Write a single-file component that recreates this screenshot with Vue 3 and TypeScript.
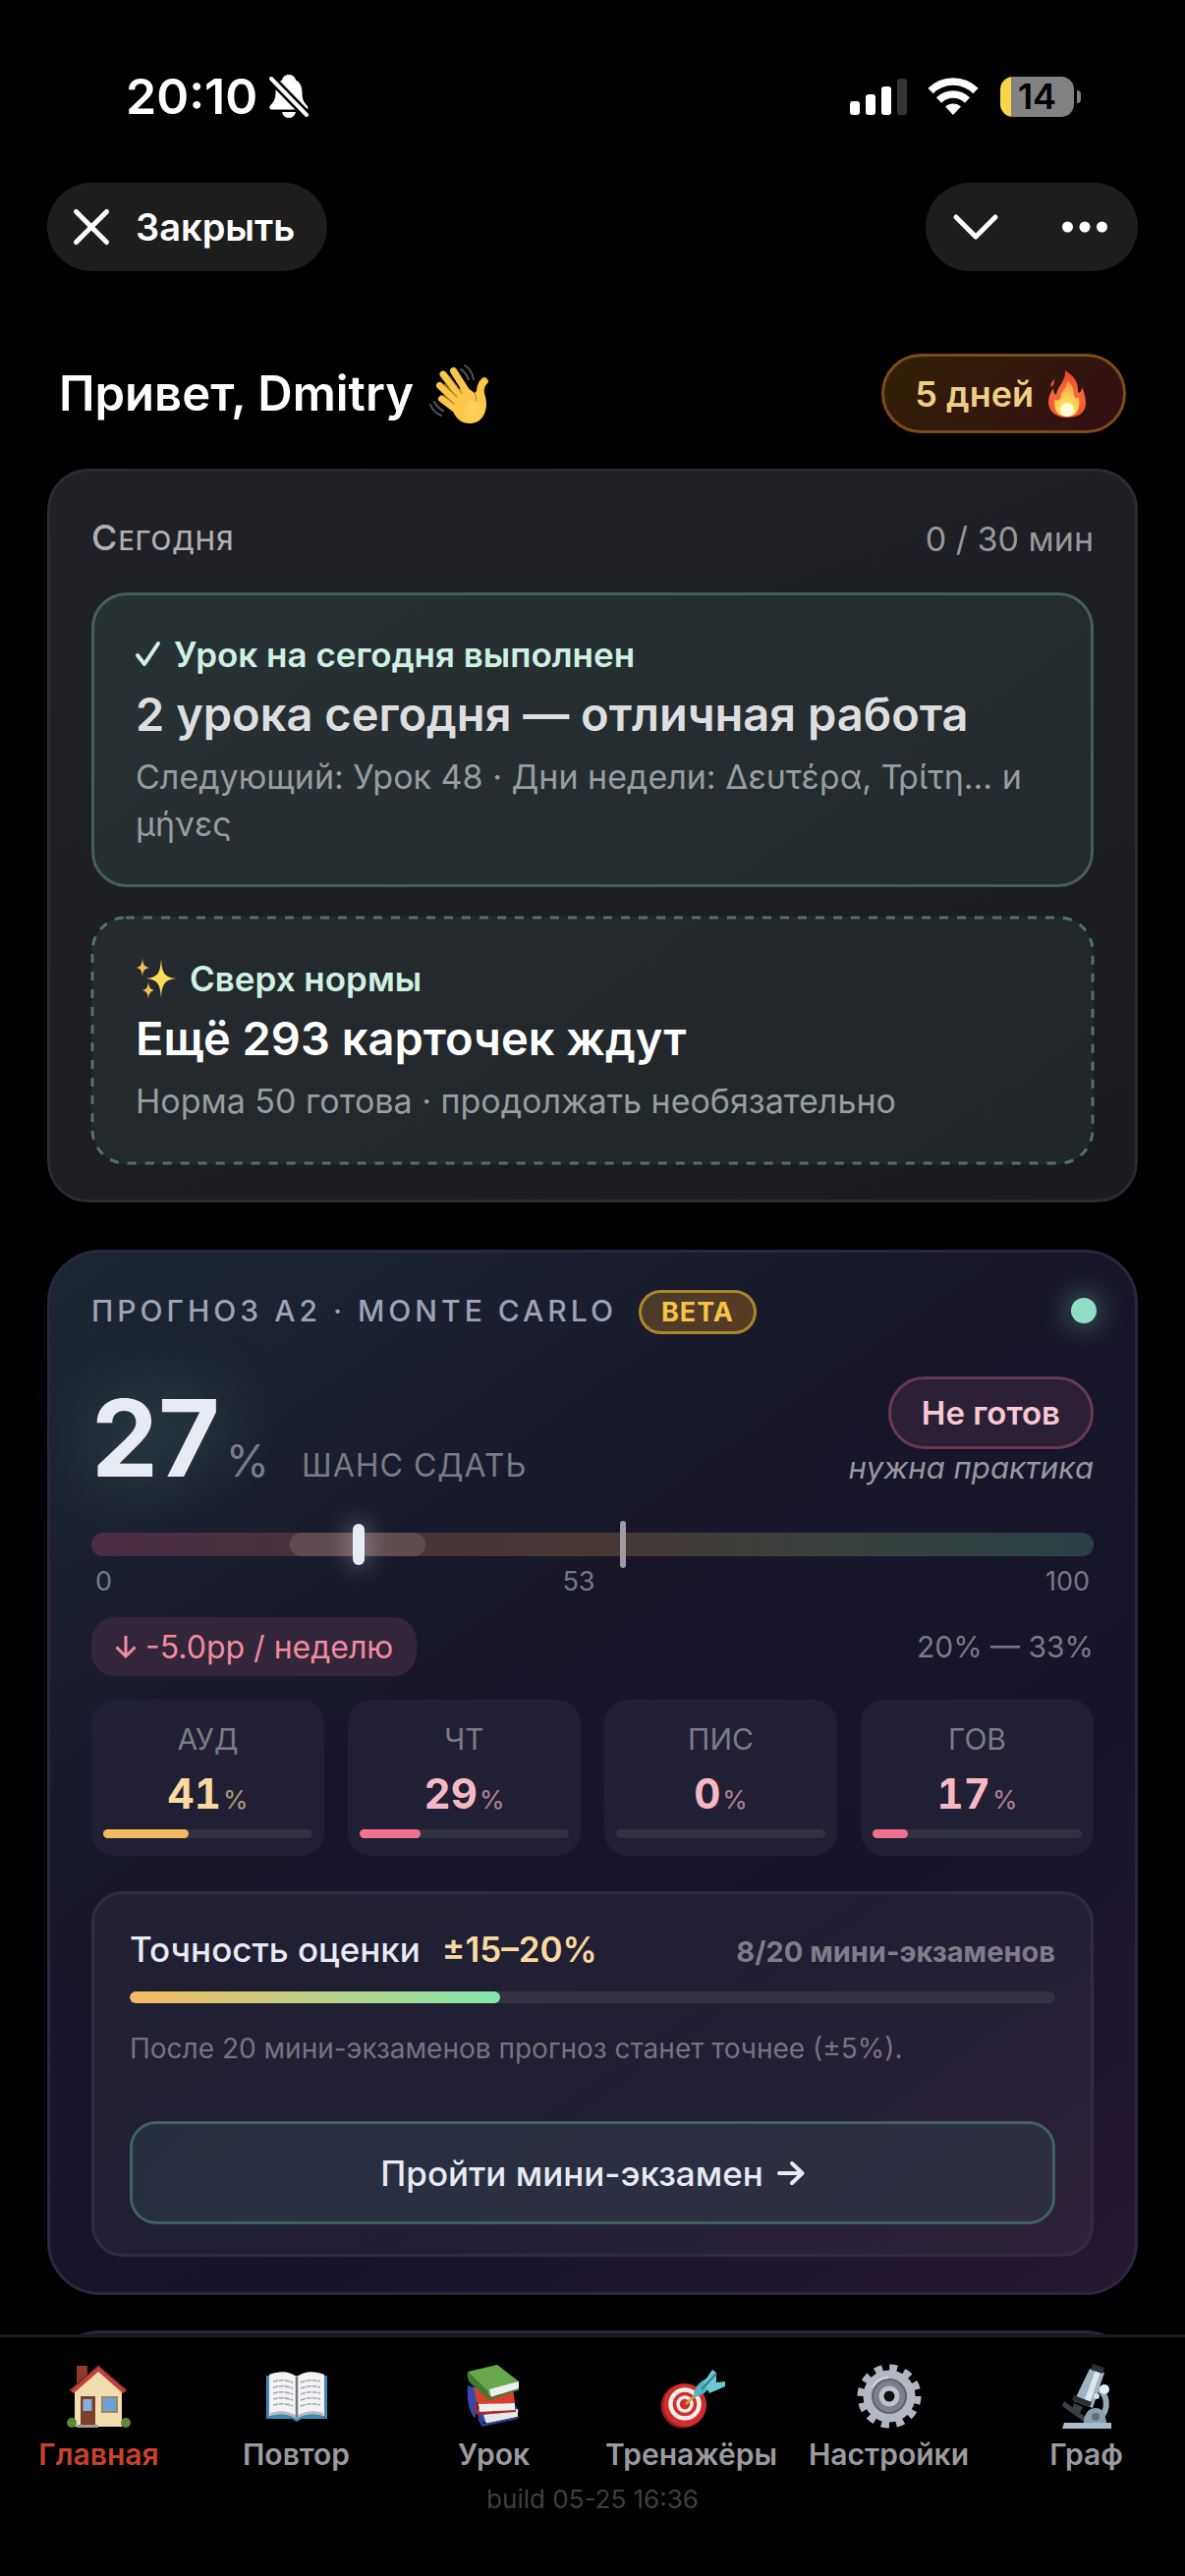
<script setup lang="ts">
interface Skill {
  name: string
  value: number
  tone: 'amber' | 'rose'
}

interface Tab {
  id: string
  label: string
}

const skills: Skill[] = [
  { name: 'АУД', value: 41, tone: 'amber' },
  { name: 'ЧТ', value: 29, tone: 'rose' },
  { name: 'ПИС', value: 0, tone: 'rose' },
  { name: 'ГОВ', value: 17, tone: 'rose' },
]

const tabs: Tab[] = [
  { id: 'home', label: 'Главная' },
  { id: 'review', label: 'Повтор' },
  { id: 'lesson', label: 'Урок' },
  { id: 'drills', label: 'Тренажёры' },
  { id: 'settings', label: 'Настройки' },
  { id: 'graph', label: 'Граф' },
]

const activeTab = 'home'
const forecast = { score: 27, low: 20, high: 33, threshold: 53 }
const exams = { done: 8, total: 20 }
const bars = [14, 21, 29, 37]
</script>

<template>
  <div class="app">
    <header class="status">
      <div class="status-left">
        <span class="clock">20:10</span>
        <svg class="bell" viewBox="0 0 40 44" aria-hidden="true">
          <path d="M20 0c4 0 6.500 2.500 7 5.500 4.500 2 6.500 7 6.500 12.500 0 8 2 10 5 13.500 1.500 2 1 4-1.500 4H3c-2.500 0-3.500-2-2-4C4 28 6.500 26 6.500 18c0-5.500 2-10.500 6.500-12.500C13.500 2.500 16 0 20 0z" fill="#fff" />
          <path d="M13 38h14c-1 4-3.500 6-7 6s-6-2-7-6z" fill="#fff" />
          <path d="M2 4l37 38" stroke="#000" stroke-width="9" />
          <path d="M2 4l36 37" stroke="#fff" stroke-width="4" stroke-linecap="round" />
        </svg>
      </div>
      <div class="status-right">
        <svg class="signal" viewBox="0 0 58 37" aria-hidden="true">
          <rect v-for="(h, i) in bars" :key="h" :x="i * 16" :y="37 - h" width="10" :height="h" rx="3" :fill="i < 3 ? '#fff' : '#353535'" />
        </svg>
        <svg class="wifi" viewBox="0 0 52 38" aria-hidden="true">
          <g fill="none" stroke="#fff" stroke-width="7.500">
            <path d="M3 13.500C16 .700 36 .700 49 13.500" />
            <path d="M11.500 23C20 15 32 15 40.500 23" />
          </g>
          <path d="M18 29.500c4.500-4 11.500-4 16 0L26 38z" fill="#fff" />
        </svg>
        <div class="battery"><span>14</span></div>
      </div>
    </header>

    <div class="toolbar">
      <button class="pill close" type="button">
        <svg viewBox="0 0 36 36" aria-hidden="true"><path d="M2.500 2.500l31 31M33.500 2.500l-31 31" /></svg>
        <span>Закрыть</span>
      </button>
      <div class="pill actions">
        <button type="button" aria-label="Свернуть">
          <svg viewBox="0 0 46 46" aria-hidden="true"><path d="M3 13l20 20 20-20" /></svg>
        </button>
        <button type="button" aria-label="Ещё">
          <svg viewBox="0 0 46 46" aria-hidden="true" class="dots"><circle cx="5.500" cy="23" r="5.500" /><circle cx="23" cy="23" r="5.500" /><circle cx="40.500" cy="23" r="5.500" /></svg>
        </button>
      </div>
    </div>

    <main class="content">
      <div class="greeting">
        <h1>
          Привет, Dmitry
          <svg class="wave" viewBox="0 0 60 60" aria-hidden="true">
            <defs>
              <radialGradient id="skin" cx=".6" cy=".65" r=".7">
                <stop offset="0" stop-color="#ffd55c" /><stop offset=".7" stop-color="#fbc547" /><stop offset="1" stop-color="#d98c20" />
              </radialGradient>
            </defs>
            <path d="M24 36C20 46 28 60 41 60c12 0 17-10 17-20 0-8-4-14-3-20l-9 9-12-9z" fill="url(#skin)" />
            <g fill="none" stroke="#fbc74a" stroke-width="7" stroke-linecap="round">
              <path d="M24.500 6.500L42 34" /><path d="M14 10l22 28" /><path d="M10.500 21.500L33 43" /><path d="M12.500 35L31 49" />
              <path d="M56 17c-5 4-4 10-5 18" stroke-width="7.500" />
            </g>
            <g fill="none" stroke="#c98a21" stroke-width="1.200" stroke-linecap="round">
              <path d="M19.500 11.500L33 29.500M15.500 20L28 33M15 31l10 9M46 30c2 2 2 4 1 7" />
            </g>
            <g fill="none" stroke="#555" stroke-width="2" stroke-linecap="round">
              <path d="M36 1c5 3 8 8 9 14M32 5c4 2 6 6 8 10M1 41c2 5 6 9 11 11M5 38c2 4 5 7 9 9" />
            </g>
          </svg>
        </h1>
        <button class="streak" type="button">
          <span>5 дней</span>
          <svg viewBox="0 0 38 48" aria-hidden="true">
            <defs>
              <linearGradient id="flame" x1="0" y1="0" x2="0" y2="1">
                <stop offset="0" stop-color="#e8412c" /><stop offset=".45" stop-color="#f4683c" /><stop offset="1" stop-color="#f0532f" />
              </linearGradient>
              <radialGradient id="core" cx=".5" cy=".9" r=".8">
                <stop offset="0" stop-color="#fffbe0" /><stop offset=".35" stop-color="#fde35a" /><stop offset="1" stop-color="#f59b45" />
              </radialGradient>
            </defs>
            <path d="M17 0c8 5 13 11 13 19 0 2 0 3 1 4 2-1 3-3 3-6 3 6 4 12 4 17 0 9-8 14-19 14S0 42 0 32c0-5 2-9 5-14 0 4 1 6 3 7 1-9 10-14 9-25z" fill="url(#flame)" />
            <path d="M3 17c-2-3 1-6 3-8 0 3 0 6-3 8z" fill="#ea4a2d" />
            <path d="M19 10c5 5 7 9 7 14 0 4 2 5 5 3 2 10-1 20-12 20S4 38 7 29c3 3 5 1 6-4 1-5 6-7 6-15z" fill="url(#core)" />
            <ellipse cx="19" cy="40" rx="7" ry="7" fill="#fffbd8" />
          </svg>
        </button>
      </div>

      <section class="card today">
        <div class="today-head">
          <h2>Сегодня</h2>
          <span>0 / 30 мин</span>
        </div>
        <article class="task done">
          <p class="task-tag">
            <svg class="check" viewBox="0 0 26 26" aria-hidden="true"><path d="M2 14l7 9L23 2" /></svg>
            Урок на сегодня выполнен
          </p>
          <h3>2 урока сегодня — отличная работа</h3>
          <p class="task-note">Следующий: Урок 48 · Дни недели: Δευτέρα, Τρίτη... и μήνες</p>
        </article>
        <article class="task extra">
          <svg class="outline" aria-hidden="true"><rect width="100%" height="100%" rx="34" /></svg>
          <p class="task-tag">
            <svg class="sparkles" viewBox="0 0 42 42" aria-hidden="true">
              <path d="M26 1c1 14 3 19 16 20-13 1-15 6-16 20-1-14-3-19-16-20 13-1 15-6 16-20z" fill="#fbdc5c" />
              <path d="M7 0c.5 7 2 9 7 10-5 1-6.500 3-7 9-.5-6-2-8-6-9 4-1 5.500-3 6-10zM13 24c.5 6 2 8 6 9-4 1-5.500 3-6 9-.5-6-2-8-6-9 4-1 5.500-3 6-9z" fill="#f7bd4c" />
            </svg>
            Сверх нормы
          </p>
          <h3>Ещё 293 карточек ждут</h3>
          <p class="task-note">Норма 50 готова · продолжать необязательно</p>
        </article>
      </section>

      <section class="card forecast">
        <div class="forecast-head">
          <h2>Прогноз A2 · Monte Carlo</h2>
          <span class="beta">BETA</span>
          <i class="live"></i>
        </div>

        <div class="score-row">
          <div class="score">
            <strong>{{ forecast.score }}</strong>
            <span class="percent">%</span>
            <span class="chance">Шанс сдать</span>
          </div>
          <div class="verdict">
            <span class="verdict-pill">Не готов</span>
            <em>нужна практика</em>
          </div>
        </div>

        <div class="range">
          <i class="band" :style="{ left: forecast.low - 0.2 + '%', width: forecast.high - forecast.low + 0.5 + '%' }"></i>
          <i class="needle" :style="{ left: forecast.score - 0.3 + '%' }"></i>
          <i class="limit" :style="{ left: forecast.threshold + '%' }"></i>
        </div>
        <div class="scale"><span>0</span><span>{{ forecast.threshold }}</span><span>100</span></div>

        <div class="trend-row">
          <span class="trend">
            <svg viewBox="0 0 22 24" aria-hidden="true"><path d="M11 1v21M1.500 12.500L11 22l9.500-9.500" /></svg>
            -5.0pp / неделю
          </span>
          <span class="interval">{{ forecast.low }}% — {{ forecast.high }}%</span>
        </div>

        <div class="skills">
          <div v-for="s in skills" :key="s.name" class="skill" :class="s.tone">
            <span class="skill-name">{{ s.name }}</span>
            <p class="skill-value"><b>{{ s.value }}</b><span>%</span></p>
            <div class="meter"><i :style="{ width: s.value + '%' }"></i></div>
          </div>
        </div>

        <div class="accuracy">
          <div class="accuracy-head">
            <span>Точность оценки</span>
            <b>±15–20%</b>
            <span class="exams">{{ exams.done }}/{{ exams.total }} мини-экзаменов</span>
          </div>
          <div class="progress"><i :style="{ width: (exams.done / exams.total) * 100 + '%' }"></i></div>
          <p>После 20 мини-экзаменов прогноз станет точнее (±5%).</p>
          <button type="button">
            Пройти мини-экзамен
            <svg viewBox="0 0 28 26" aria-hidden="true"><path d="M2 13h23M15 3l10.500 10L15 23" /></svg>
          </button>
        </div>
      </section>

      <section class="card next" aria-hidden="true"></section>
    </main>

    <footer class="dock">
      <nav>
        <a v-for="t in tabs" :key="t.id" :href="'#' + t.id" :class="{ active: t.id === activeTab }">
          <svg viewBox="0 0 66 66" aria-hidden="true">
            <g v-if="t.id === 'home'">
              <rect x="10" y="2" width="11" height="22" fill="#8f3a2c" />
              <path d="M8 26L32 4l24 22v38H8z" fill="#f0deb0" />
              <path d="M3 27L32 2l29 25-4 3L32 8 7 30z" fill="#c8403a" />
              <path d="M3 27L32 2l29 25" fill="none" stroke="#5c2a26" stroke-width="1.500" />
              <rect x="14" y="33" width="15" height="30" fill="#7c3f2a" /><rect x="16.500" y="36" width="9" height="12" fill="#7fb0de" />
              <rect x="35" y="33" width="17" height="17" fill="#9a8660" /><rect x="37" y="35" width="13" height="13" fill="#6fa0d8" />
              <path d="M10 62h22v3H10z" fill="#a49c90" />
              <circle cx="5" cy="60" r="5" fill="#5c8a35" /><circle cx="60" cy="60" r="5" fill="#5c8a35" />
            </g>
            <g v-else-if="t.id === 'review'">
              <path d="M2 12h62v44H38l-5 3-5-3H2z" fill="#3f88b8" />
              <path d="M5 11c10-4 20-4 28 2 8-6 18-6 28-2v42c-10-3-20-3-28 3-8-6-18-6-28-3z" fill="#f3f3f6" />
              <path d="M6 50c10-3 19-2 27 3 8-5 17-6 27-3v3c-10-3-19-2-27 3-8-5-17-6-27-3z" fill="#b9b9c0" />
              <path d="M33 13v42" stroke="#77777f" stroke-width="2.500" />
              <path d="M9 18q10-3 20 1M9 24q10-3 20 1M9 30q10-3 20 1M9 36q10-3 20 1M9 42q10-3 20 1M37 19q10-4 20-1M37 25q10-4 20-1M37 31q10-4 20-1M37 37q10-4 20-1M37 43q10-4 20-1" fill="none" stroke="#a5a5ae" stroke-width="1.600" stroke-dasharray="5 1" />
            </g>
            <g v-else-if="t.id === 'lesson'">
              <path d="M6 22l10 3-2 30-3-2C6 44 5 34 6 22z" fill="#3449a8" />
              <path d="M12 46l42-5 4 8-36 11z" fill="#2f47a5" /><path d="M22 52l35-6v8l-32 7z" fill="#e8e8ec" /><path d="M18 46l4 15 35-7v2l-36 8c-5-5-6-12-3-18z" fill="#2c3f96" />
              <path d="M12 24l40-1 2 17-38 2z" fill="#d8402e" /><path d="M17 41l37-1v8l-36 2z" fill="#f0eeee" /><path d="M14 41l3 1c-1 3-1 5 0 7l38-2v2l-39 3c-4-3-4-8-2-11z" fill="#a82a22" />
              <path d="M6 8l30-7 22 17-30 14z" fill="#68a84c" /><path d="M28 26l30-8v8l-28 9z" fill="#efefef" /><path d="M6 8l21 20c-1 3 0 5 2 6l29-9v2L28 37 9 20C6 17 5 12 6 8z" fill="#417a34" />
            </g>
            <g v-else-if="t.id === 'drills'">
              <circle cx="24" cy="43" r="22.500" fill="#8e1d20" /><circle cx="26" cy="42" r="22" fill="#cf2e2d" />
              <circle cx="26" cy="41" r="14.500" fill="none" stroke="#f3efec" stroke-width="4.500" /><circle cx="26" cy="41" r="7" fill="none" stroke="#f3efec" stroke-width="3.500" />
              <path d="M27 41l12-11" stroke="#c9a23a" stroke-width="2.500" />
              <path d="M35 31c1-7 5-12 13-16l5 5c-3 8-9 12-17 14z" fill="#52b4c0" /><path d="M45 19L54 6l4 3v10l9-1v5l-16 7z" fill="#6cc8d2" /><path d="M43 26l15-16" stroke="#2e7f8c" stroke-width="2" />
            </g>
            <g v-else-if="t.id === 'settings'">
              <circle cx="33" cy="33" r="29" fill="none" stroke="#b2b6c0" stroke-width="7" stroke-dasharray="8 7.180" />
              <circle cx="33" cy="33" r="22" fill="#7b818c" stroke="#b4b8c3" stroke-width="9" />
              <circle cx="33" cy="33" r="17" fill="none" stroke="#5d636e" stroke-width="2" />
              <circle cx="33" cy="33" r="8" fill="#111" stroke="#bfc3cd" stroke-width="5" />
              <path d="M16 24a19 19 0 0 1 16-10" fill="none" stroke="#d5d8df" stroke-width="2" />
            </g>
            <g v-else>
              <path d="M41 24c14 4 16 24 4 32" fill="none" stroke="#94a8b6" stroke-width="6" />
              <path d="M36 5l15 4-12 36-19-7z" fill="#9fb4c2" /><path d="M42 7l5 1-12 35-6-2z" fill="#dde8ee" />
              <path d="M39 0l12 4-2 6-12-4z" fill="#2c2f33" /><path d="M20 32l18 7-2 5-18-7z" fill="#2a2d31" />
              <path d="M20 40l9 4-3 6-8-3zM10 38l23 17-3 4L8 43z" fill="#3a3f45" />
              <circle cx="51" cy="26" r="5" fill="#e8edf0" /><circle cx="43" cy="33" r="3" fill="#d5dde2" />
              <path d="M30 60c0-9 5-15 12-15s10 6 11 15z" fill="#8ba0ae" /><circle cx="42" cy="54" r="4" fill="#5e717e" />
              <path d="M10 60h48v6H8z" fill="#a9bdca" />
            </g>
          </svg>
          <span>{{ t.label }}</span>
        </a>
      </nav>
      <small>build 05-25 16:36</small>
    </footer>
  </div>
</template>

<style>
html,
body {
  margin: 0;
  background: #000;
}
</style>

<style scoped>
.app {
  display: flex;
  flex-direction: column;
  height: 100vh;
  overflow: hidden;
  background: #000;
  color: #fff;
  font-family: Inter, "Noto Sans", sans-serif;
  font-size: 36px;
}
.app * {
  box-sizing: border-box;
}
h1,
h2,
h3,
p {
  margin: 0;
  font-weight: 400;
}
button {
  margin: 0;
  padding: 0;
  border: 0;
  background: none;
  color: inherit;
  font: inherit;
  cursor: pointer;
}
svg {
  display: block;
  flex: none;
  overflow: visible;
}

.status,
.status-left,
.status-right,
.toolbar,
.pill,
.greeting,
.today-head,
.trend-row {
  display: flex;
  align-items: center;
}
.status {
  justify-content: space-between;
  flex: none;
  height: 186px;
  padding: 10px 106px 0 128px;
  align-items: flex-start;
}
.status-left,
.status-right {
  height: 176px;
}
.status-left {
  gap: 12px;
}
.clock {
  font-size: 50px;
  font-weight: 600;
}
.bell {
  width: 40px;
  height: 44px;
}
.signal {
  width: 58px;
  height: 37px;
}
.wifi {
  width: 52px;
  height: 38px;
  margin: 0 22px 0 21px;
}
.battery {
  position: relative;
  width: 75px;
  height: 41px;
  border-radius: 13px;
  background: linear-gradient(90deg, #f8d648 11px, #828282 11px);
  color: #000;
  font-size: 36px;
  font-weight: 600;
  line-height: 41px;
  text-align: center;
  margin-right: 7px;
}
.battery::after {
  content: "";
  position: absolute;
  top: 14px;
  right: -7px;
  width: 4px;
  height: 13px;
  border-radius: 0 4px 4px 0;
  background: #828282;
}

.toolbar {
  flex: none;
  justify-content: space-between;
  padding: 0 48px;
}
.pill {
  height: 90px;
  border-radius: 45px;
  background: #1d1d1d;
}
.pill path {
  fill: none;
  stroke: #fff;
  stroke-width: 5;
  stroke-linecap: round;
  stroke-linejoin: round;
}
.close {
  gap: 27px;
  padding: 0 33px 0 27px;
  font-size: 38px;
  font-weight: 600;
}
.close svg {
  width: 36px;
  height: 36px;
}
.actions {
  gap: 65px;
  padding: 0 31px 0 28px;
}
.actions svg {
  width: 46px;
  height: 46px;
}
.dots {
  fill: #fff;
}

.content {
  flex: 1;
  min-height: 0;
  padding: 84px 48px 0;
  overflow: hidden;
}
.greeting {
  justify-content: space-between;
  height: 81px;
  margin-bottom: 36px;
  padding: 0 12px;
}
.greeting h1 {
  display: flex;
  align-items: center;
  gap: 16px;
  font-size: 49px;
  font-weight: 600;
}
.wave {
  width: 60px;
  height: 60px;
}
.streak {
  display: flex;
  align-items: center;
  gap: 15px;
  height: 81px;
  padding: 0 38px 0 31px;
  border: 3px solid #7e4b18;
  border-radius: 41px;
  background: linear-gradient(135deg, #302006, #32180d 50%, #330d12);
  color: #f0ce84;
  font-weight: 600;
}
.streak svg {
  width: 38px;
  height: 48px;
}

.card {
  border: 3px solid #2a2b30;
}
.today {
  padding: 45px 42px 36px;
  border-radius: 42px;
  background: linear-gradient(160deg, #202127, #1b1b1f);
}
.today-head {
  justify-content: space-between;
  height: 48px;
  margin-bottom: 30px;
  color: #98989c;
  font-size: 34px;
  line-height: 48px;
}
.today-head h2 {
  color: #b0b0b4;
  font-size: 27px;
  font-weight: 500;
  letter-spacing: 1px;
  text-transform: uppercase;
}
.today-head h2::first-letter {
  font-size: 36px;
}
.task {
  padding: 39px 42px 37px;
  border: 3px solid #43605b;
  border-radius: 36px;
  background: linear-gradient(145deg, #283134, #232a2d);
}
.task-tag {
  display: flex;
  align-items: center;
  gap: 13px;
  height: 42px;
  color: #cff1e2;
  font-size: 35px;
  font-weight: 600;
}
.check {
  width: 26px;
  height: 26px;
}
.check path {
  fill: none;
  stroke: #cff1e2;
  stroke-width: 4;
  stroke-linecap: round;
  stroke-linejoin: round;
}
.task h3 {
  margin: 10px 0;
  color: #dededf;
  font-size: 47px;
  font-weight: 600;
  line-height: 60px;
}
.task-note {
  color: #999d9f;
  font-size: 34px;
  line-height: 48px;
}
.extra {
  position: relative;
  margin-top: 30px;
  border-color: transparent;
  background: linear-gradient(145deg, #242a2e, #212628) border-box;
}
.outline {
  position: absolute;
  inset: -2px;
  width: calc(100% + 4px);
  height: calc(100% + 4px);
}
.outline rect {
  fill: none;
  stroke: #4f746c;
  stroke-width: 3;
  stroke-dasharray: 9 9;
}
.extra h3 {
  color: #fff;
}
.sparkles {
  width: 42px;
  height: 42px;
}

.forecast {
  margin-top: 48px;
  padding: 38px 42px 36px;
  border-color: #2a263c;
  border-radius: 54px;
  background: linear-gradient(145deg, #1c2733 0%, #171629 40%, #17142a 68%, #261831 100%);
}
.forecast-head {
  display: flex;
  height: 45px;
}
.forecast-head h2 {
  color: #a0a2b5;
  font-size: 30px;
  font-weight: 500;
  line-height: 42px;
  letter-spacing: 4px;
  text-transform: uppercase;
}
.beta {
  height: 45px;
  margin-left: 22px;
  padding: 0 20px;
  border: 3px solid #ab862c;
  border-radius: 23px;
  background: linear-gradient(135deg, #493b2a, #583b24);
  color: #f6c344;
  font-size: 27px;
  font-weight: 700;
  line-height: 39px;
  letter-spacing: 1px;
}
.live {
  width: 26px;
  height: 26px;
  margin: 8px -3px 0 auto;
  border-radius: 50%;
  background: #91dcc5;
  box-shadow: 0 0 30px #91dcc5a0;
}
.score-row {
  display: flex;
  justify-content: space-between;
  align-items: flex-end;
  margin-top: 43px;
  height: 111px;
}
.score {
  display: flex;
  align-items: baseline;
  color: #7b7c86;
  line-height: 1;
}
.score strong {
  color: #e8eaf4;
  font-size: 108px;
  font-weight: 700;
  line-height: 96px;
  text-shadow: 0 0 72px #91dcc566;
}
.percent {
  margin-left: 6px;
  font-size: 45px;
}
.chance {
  margin-left: 33px;
  font-size: 32px;
  letter-spacing: 1px;
  text-transform: uppercase;
}
.verdict {
  display: flex;
  flex-direction: column;
  align-items: flex-end;
}
.verdict-pill {
  height: 74px;
  padding: 0 31px;
  border: 3px solid #683b51;
  border-radius: 37px;
  background: #2c2036;
  color: #f8c9d2;
  font-size: 33px;
  font-weight: 600;
  line-height: 68px;
}
.verdict em {
  color: #98989f;
  font-size: 31px;
  line-height: 37px;
}
.range {
  position: relative;
  height: 24px;
  margin-top: 48px;
  border-radius: 12px;
  background: linear-gradient(90deg, #4a2e45, #483338 25%, #483835 50%, #37413d 75%, #2b4147);
}
.range i {
  position: absolute;
}
.band {
  top: 0;
  height: 24px;
  border-radius: 12px;
  background: #ffffff20;
}
.needle {
  top: -9px;
  width: 12px;
  height: 42px;
  margin-left: -6px;
  border-radius: 6px;
  background: #e8eaf4;
  box-shadow: 0 0 24px #ffffff80;
}
.limit {
  top: -12px;
  width: 6px;
  height: 48px;
  margin-left: -3px;
  border-radius: 3px;
  background: #a09b9e;
}
.scale {
  display: flex;
  justify-content: space-between;
  margin-top: 8px;
  padding: 0 4px;
  color: #797a84;
  font-size: 27px;
  line-height: 36px;
}
.trend-row {
  justify-content: space-between;
  margin-top: 18px;
  color: #797a84;
}
.interval {
  font-size: 30px;
}
.trend {
  display: flex;
  align-items: center;
  gap: 9px;
  height: 60px;
  padding: 0 24px;
  border-radius: 24px;
  background: #33263a;
  color: #f28b9f;
  font-size: 32px;
}
.trend svg {
  width: 22px;
  height: 24px;
}
.trend path {
  fill: none;
  stroke: #f28b9f;
  stroke-width: 3;
}
.skills {
  display: grid;
  grid-template-columns: repeat(4, 1fr);
  gap: 24px;
  margin-top: 24px;
}
.skill {
  padding: 22px 12px 18px;
  border-radius: 24px;
  background: #211f33;
  text-align: center;
}
.skill-name {
  display: block;
  color: #7b7c86;
  font-size: 30px;
  line-height: 36px;
}
.skill-value {
  display: flex;
  align-items: baseline;
  justify-content: center;
  gap: 2px;
  height: 48px;
  margin: 14px 0 12px;
}
.skill-value b {
  font-size: 42px;
  font-weight: 700;
  line-height: 48px;
  font-variant-numeric: tabular-nums;
}
.skill-value span {
  font-size: 26px;
  line-height: 1;
  opacity: 0.65;
}
.amber .skill-value {
  color: #fad9a0;
}
.rose .skill-value {
  color: #f5b8c4;
}
.meter {
  height: 9px;
  border-radius: 5px;
  background: #323041;
}
.meter i {
  display: block;
  height: 9px;
  border-radius: 5px;
  background: #f0728e;
}
.amber .meter i {
  background: #f3ba60;
}
.accuracy {
  margin-top: 36px;
  padding: 32px 36px 30px;
  border: 3px solid #302c40;
  border-radius: 32px;
  background: #ffffff0b;
}
.accuracy-head {
  display: flex;
  align-items: baseline;
  gap: 22px;
  height: 48px;
  color: #e8eaf4;
  font-size: 35px;
  font-weight: 500;
  line-height: 48px;
}
.accuracy-head b {
  color: #fad9a0;
  font-weight: 600;
}
.accuracy-head .exams {
  margin-left: auto;
  color: #807c89;
  font-size: 29px;
  font-weight: 700;
}
.progress {
  height: 12px;
  margin-top: 19px;
  overflow: hidden;
  border-radius: 6px;
  background: #353143;
}
.progress i {
  display: block;
  height: 12px;
  border-radius: 6px;
  background: linear-gradient(90deg, #f5b961, #84e6ac);
}
.accuracy p {
  margin-top: 25px;
  color: #77747f;
  font-size: 28px;
  line-height: 42px;
}
.accuracy button {
  display: flex;
  align-items: center;
  justify-content: center;
  gap: 14px;
  width: 100%;
  height: 105px;
  margin-top: 53px;
  border: 3px solid #41635e;
  border-radius: 27px;
  background: linear-gradient(135deg, #273040, #2f2e41);
  color: #e8eaf4;
  font-size: 35px;
  font-weight: 500;
}
.accuracy button svg {
  width: 28px;
  height: 26px;
}
.accuracy button path {
  fill: none;
  stroke: #e8eaf4;
  stroke-width: 4;
  stroke-linecap: round;
  stroke-linejoin: round;
}
.next {
  height: 160px;
  margin-top: 36px;
  border-color: #29263c;
  border-radius: 54px;
  background: #171629;
}

.dock {
  flex: none;
  padding: 27px 0 63px;
  border-top: 3px solid #1c1c1c;
  background: #000;
  text-align: center;
}
.dock nav {
  display: grid;
  grid-template-columns: repeat(6, 1fr);
}
.dock a {
  display: flex;
  flex-direction: column;
  align-items: center;
  gap: 8px;
  color: #9b9b9f;
  font-size: 30px;
  font-weight: 600;
  line-height: 36px;
  text-decoration: none;
}
.dock a.active {
  color: #c9432a;
}
.dock a svg {
  width: 66px;
  height: 66px;
}
.dock small {
  display: block;
  margin-top: 13px;
  color: #3f3f3f;
  font-size: 26px;
  line-height: 30px;
}
</style>
